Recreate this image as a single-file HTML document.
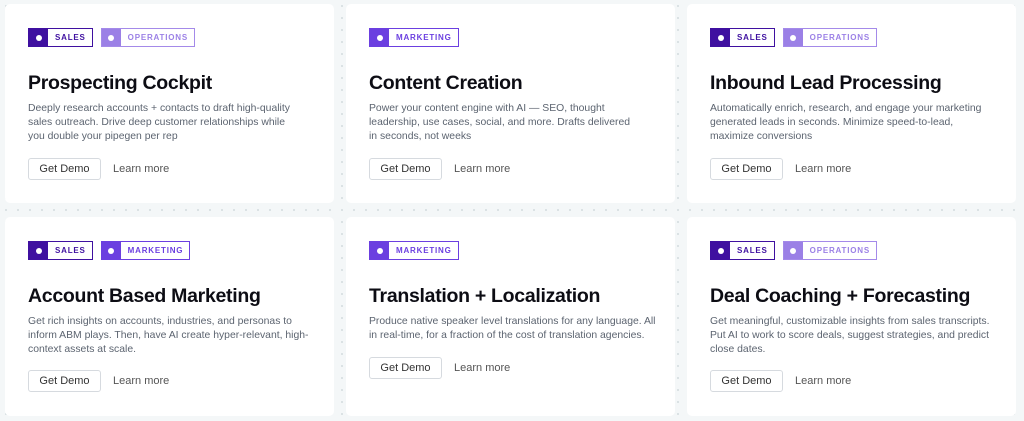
<!DOCTYPE html>
<html><head><style>
body{margin:0;width:1024px;height:421px;background-color:#f4f7f8;background-image:radial-gradient(#d9e0e3 1px,transparent 1.2px);background-size:12px 12px;font-family:"Liberation Sans",sans-serif;position:relative;overflow:hidden}
.c{position:absolute;width:329px;height:199px;background:#fff;border-radius:5px}
.tags{position:absolute;left:23px;top:24px;display:flex;gap:8px}
.t{display:flex;height:17px;border:1px solid;font-size:8px;font-weight:bold;letter-spacing:0.8px;align-items:center}
.t .d{width:19px;height:17px;display:flex;align-items:center;justify-content:center}
.t .d:after{content:"";width:6px;height:6px;border-radius:50%;background:#fff}
.t span{padding:0 6px 0 7px}
.s{border-color:#3f10a0;color:#3f10a0}.s .d{background:#3f10a0}
.o{border-color:#a48ae9;color:#9b80e6}.o .d{background:#9b80e6}
.m{border-color:#6b3fe0;color:#6b3fe0}.m .d{background:#6b3fe0}
h2{position:absolute;left:23px;top:68px;margin:0;font-size:19.5px;color:#0d0d14;font-weight:bold;letter-spacing:-0.3px}
p{position:absolute;left:23px;top:98px;margin:0;white-space:nowrap;font-size:10.4px;line-height:14px;color:#5c6470}
.b{position:absolute;left:23px;width:71px;height:20px;border:1px solid #d6dadf;border-radius:3px;font-size:11px;color:#333;text-align:center;line-height:20px}
.l{position:absolute;left:108px;font-size:11px;color:#555;line-height:22px}
</style></head><body>
<div class="c" style="left:5px;top:4px"><div class="tags"><div class="t s"><div class="d"></div><span>SALES</span></div><div class="t o"><div class="d"></div><span>OPERATIONS</span></div></div><h2>Prospecting Cockpit</h2><p>Deeply research accounts + contacts to draft high-quality<br>sales outreach. Drive deep customer relationships while<br>you double your pipegen per rep</p><div class="b" style="top:154px">Get Demo</div><div class="l" style="top:154px">Learn more</div></div>
<div class="c" style="left:346px;top:4px"><div class="tags"><div class="t m"><div class="d"></div><span>MARKETING</span></div></div><h2>Content Creation</h2><p>Power your content engine with AI — SEO, thought<br>leadership, use cases, social, and more. Drafts delivered<br>in seconds, not weeks</p><div class="b" style="top:154px">Get Demo</div><div class="l" style="top:154px">Learn more</div></div>
<div class="c" style="left:687px;top:4px"><div class="tags"><div class="t s"><div class="d"></div><span>SALES</span></div><div class="t o"><div class="d"></div><span>OPERATIONS</span></div></div><h2>Inbound Lead Processing</h2><p>Automatically enrich, research, and engage your marketing<br>generated leads in seconds. Minimize speed-to-lead,<br>maximize conversions</p><div class="b" style="top:154px">Get Demo</div><div class="l" style="top:154px">Learn more</div></div>
<div class="c" style="left:5px;top:217px"><div class="tags"><div class="t s"><div class="d"></div><span>SALES</span></div><div class="t m"><div class="d"></div><span>MARKETING</span></div></div><h2>Account Based Marketing</h2><p>Get rich insights on accounts, industries, and personas to<br>inform ABM plays. Then, have AI create hyper-relevant, high-<br>context assets at scale.</p><div class="b" style="top:153px">Get Demo</div><div class="l" style="top:153px">Learn more</div></div>
<div class="c" style="left:346px;top:217px"><div class="tags"><div class="t m"><div class="d"></div><span>MARKETING</span></div></div><h2>Translation + Localization</h2><p>Produce native speaker level translations for any language. All<br>in real-time, for a fraction of the cost of translation agencies.</p><div class="b" style="top:140px">Get Demo</div><div class="l" style="top:140px">Learn more</div></div>
<div class="c" style="left:687px;top:217px"><div class="tags"><div class="t s"><div class="d"></div><span>SALES</span></div><div class="t o"><div class="d"></div><span>OPERATIONS</span></div></div><h2>Deal Coaching + Forecasting</h2><p>Get meaningful, customizable insights from sales transcripts.<br>Put AI to work to score deals, suggest strategies, and predict<br>close dates.</p><div class="b" style="top:153px">Get Demo</div><div class="l" style="top:153px">Learn more</div></div>
</body></html>
